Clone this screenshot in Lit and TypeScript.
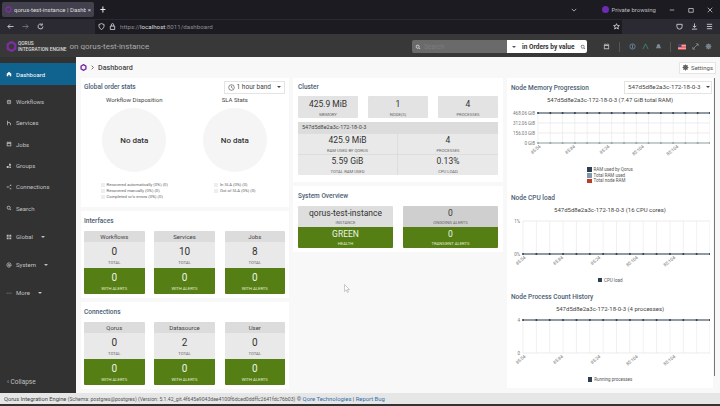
import { css, html, svg, LitElement } from "lit";
import { customElement, property } from "lit/decorators.js";

const ICONS: Record<string, string> = {
  home: "M8 2 2 7v7h4v-4h4v4h4V7z",
  workflows: "M8 2a6 6 0 1 0 0 12A6 6 0 0 0 8 2zm0 2a4 4 0 1 1 0 8 4 4 0 0 1 0-8zm0 2a2 2 0 1 0 0 4 2 2 0 0 0 0-4z",
  services: "M3 2h2v12H3zM5 6h5l3 3v5h-2v-4L9 8H5z",
  jobs: "M2 3h12v11H2zm2 4v5h8V7zM4 1h2v3H4zm6 0h2v3h-2z",
  groups: "M8 2h5v5H8zM2 8h5v5H2zM9 9h4v4H9z",
  connections: "M11 2h3v3h-3zM11 11h3v3h-3zM2 6.5h3v3H2zM5 7.3l6-3.5.6 1L5.6 8.2zM5.6 7.8l6 3.4-.6 1-6-3.4z",
  search: "M7 2a5 5 0 1 0 3 9l3 3 1.2-1.2-3-3A5 5 0 0 0 7 2zm0 1.8a3.2 3.2 0 1 1 0 6.4 3.2 3.2 0 0 1 0-6.400z",
  global: "M2 2h5v5H2zM9 2h5v5H9zM2 9h5v5H2zM9 9h5v5H9z",
  system: "M8 1.5a6.5 6.5 0 1 0 3.5 12l-.8-1.3A5 5 0 1 1 13 8v1h-1.5V8A3.5 3.5 0 1 0 10.5 10.5 2.2 2.2 0 0 0 14.5 9V8A6.5 6.5 0 0 0 8 1.5zm0 4.5a2 2 0 1 1 0 4 2 2 0 0 1 0-4z",
  more: "M2 7h2v2H2zM7 7h2v2H7zM12 7h2v2h-2z",
};

const NAV = [
  { label: "Workflows", icon: "workflows" },
  { label: "Services", icon: "services" },
  { label: "Jobs", icon: "jobs" },
  { label: "Groups", icon: "groups" },
  { label: "Connections", icon: "connections" },
  { label: "Search", icon: "search" },
];
const NAV_GROUPS = [
  { label: "Global", icon: "global" },
  { label: "System", icon: "system" },
  { label: "More", icon: "more" },
];

const INTERFACES = [
  { name: "Workflows", total: 0 },
  { name: "Services", total: 10 },
  { name: "Jobs", total: 8 },
];
const CONNECTIONS = [
  { name: "Qorus", total: 0 },
  { name: "Datasource", total: 2 },
  { name: "User", total: 0 },
];

const logo = (size: number) => html`<svg width=${size} height=${size} viewBox="0 0 16 16">
  <path d="M8 1.5 13.5 4.7v6.6L8 14.5 2.5 11.3V4.700z" fill="none" stroke="#7b2fa0" stroke-width="3.2" />
</svg>`;

const caret = html`<span class="caret"></span>`;

@customElement("line-chart")
export class LineChart extends LitElement {
  @property() heading = "";
  @property() subtitle = "";
  @property({ type: Array }) yLabels: string[] = [];
  @property({ type: Array }) lines: { y: number; color: string }[] = [];
  @property({ type: Array }) legend: { label: string; color: string }[] = [];
  @property({ type: Number }) left = 13;
  @property({ type: Number }) plotHeight = 33;
  @property({ type: Number }) plotTop = 5;
  @property({ type: Number }) legendGap = 24;

  static styles = css`
    :host {
      display: block;
    }
    h3 {
      margin: 0;
      padding-left: 1px;
      font: 500 6.5px/12px Roboto, sans-serif;
      color: #4a5d73;
    }
    .sub {
      text-align: center;
      font: 6px/12px Roboto, sans-serif;
      color: #444;
    }
    svg {
      display: block;
    }
    text {
      font: 4.5px Roboto, sans-serif;
      fill: #777;
    }
    .legend {
      display: flex;
      flex-direction: column;
      align-items: center;
      gap: 0.5px;
      font: 4.5px/5.2px Roboto, sans-serif;
      color: #555;
    }
    .legend div {
      width: 46px;
      display: flex;
      align-items: center;
      gap: 2px;
    }
    .legend.single div {
      width: auto;
    }
    .legend i {
      width: 4.5px;
      height: 4.5px;
      flex: none;
    }
  `;

  render() {
    const width = 200;
    const right = 200;
    const h = this.plotHeight;
    const top = this.plotTop;
    const steps = 14;
    const plot = right - this.left;
    const xs = Array.from({ length: steps + 1 }, (_, i) => this.left + (plot * i) / steps);
    const ticks = ["85:54", "85:84", "85:24", "85:104", "85:104"];
    return html`
      <h3>${this.heading}</h3>
      <div class="sub">${this.subtitle}</div>
      <svg width=${width} height=${top + h + this.legendGap} viewBox="0 0 ${width} ${top + h + this.legendGap}">
        ${xs.map((x) => svg`<line x1=${x} x2=${x} y1=${top} y2=${top + h} stroke="#e9e9e9" stroke-width="0.7" />`)}
        ${this.yLabels.map((label, i) => {
          const y = top + (h * i) / (this.yLabels.length - 1);
          return svg`
            <line x1=${this.left} x2=${right} y1=${y} y2=${y} stroke="#e4e4e4" stroke-width="0.7" />
            <text x=${this.left - 3} y=${y + 1.5} text-anchor="end">${label}</text>`;
        })}
        ${this.lines.map(
          (l) => svg`
            <line x1=${this.left} x2=${right} y1=${top + h * l.y} y2=${top + h * l.y} stroke=${l.color} stroke-width="1" />
            ${xs.map((x) => svg`<circle cx=${x} cy=${top + h * l.y} r="1" fill=${l.color} />`)}`
        )}
        ${ticks.map((t, i) => {
          const x = this.left + 3 + (i * plot) / 5;
          return svg`<text transform="translate(${x} ${top + h + 4}) rotate(-40)" text-anchor="end">${t}</text>`;
        })}
      </svg>
      <div class="legend ${this.legend.length === 1 ? "single" : ""}">
        ${this.legend.map((l) => html`<div><i style="background:${l.color}"></i>${l.label}</div>`)}
      </div>
    `;
  }
}

@customElement("app-root")
export class AppRoot extends LitElement {
  static styles = css`
    :host {
      display: flex;
      flex-direction: column;
      position: relative;
      width: 720px;
      height: 406px;
      overflow: hidden;
      font-family: Roboto, sans-serif;
      background: #f8f8f8;
      color: #333;
    }
    svg {
      display: block;
      flex: none;
    }

    /* browser chrome */
    .tabs {
      height: 19px;
      flex: none;
      background: #1c1b22;
      display: flex;
      align-items: center;
      padding-left: 2px;
      color: #ddd;
      font-size: 6px;
    }
    .tab {
      width: 92px;
      height: 15px;
      background: #42414d;
      border-radius: 2px;
      display: flex;
      align-items: center;
      gap: 2px;
      padding: 0 3px;
      box-sizing: border-box;
      white-space: nowrap;
      overflow: hidden;
    }
    .tab span {
      flex: 1;
      min-width: 0;
      overflow: hidden;
    }
    .new-tab {
      margin-left: 6px;
      font-size: 10px;
      color: #eee;
    }
    .spacer {
      flex: 1;
    }
    .private {
      display: flex;
      align-items: center;
      gap: 2px;
      margin-right: 13px;
      color: #bbb;
    }
    .private b {
      width: 7px;
      height: 7px;
      border-radius: 50%;
      background: #6e2ab0;
    }
    .win {
      display: flex;
      gap: 13px;
      margin-right: 7px;
      align-items: center;
    }
    .urlbar {
      height: 15px;
      flex: none;
      background: #2b2a33;
      display: flex;
      align-items: center;
      gap: 8px;
      padding-left: 7px;
    }
    .address {
      display: flex;
      align-items: center;
      gap: 4px;
      flex: 1;
      margin-left: 43px;
      padding-left: 3px;
      height: 14px;
      background: #1c1b22;
      color: #8c8c92;
      font-size: 6.2px;
    }
    .address b {
      color: #ddd;
      font-weight: 400;
    }
    .urlbar .tools {
      display: flex;
      gap: 8px;
      margin-right: 7px;
      margin-left: 46px;
    }

    /* app header */
    .appbar {
      height: 23px;
      flex: none;
      box-sizing: border-box;
      padding: 2px 0 0 6px;
      background: #383838;
      display: flex;
      align-items: center;
      color: #ccc;
    }
    .brand {
      margin-left: 1px;
      font-size: 4.8px;
      line-height: 5.5px;
      font-weight: 500;
      color: #ddd;
    }
    .on {
      margin-left: 3px;
      font-size: 8px;
      color: #aaa;
    }
    .search {
      display: flex;
      width: 175px;
      height: 13px;
      border-radius: 2px;
      overflow: hidden;
      font-size: 6.5px;
    }
    .search .in {
      width: 92px;
      background: #6a6a6a;
      display: flex;
      align-items: center;
      padding-left: 3px;
      gap: 3px;
      color: #7c7c7c;
    }
    .search .scope {
      flex: 1;
      background: #fff;
      color: #333;
      font-weight: 700;
      display: flex;
      align-items: center;
      gap: 6px;
      padding-left: 1px;
    }
    .search .scope .caret {
      color: #555;
    }
    .search .scope span:nth-child(2) {
      white-space: nowrap;
    }
    .app-icons {
      display: flex;
      align-items: center;
      margin: 0 8px 0 16px;
      gap: 6px;
    }
    .app-icons i {
      width: 1px;
      height: 10px;
      margin: 0 3px;
      background: #555;
    }
    .app-icons i.second {
      margin: 0 1px 0 2px;
    }

    /* body */
    .body {
      flex: 1;
      min-height: 0;
      display: flex;
    }
    .side {
      width: 76px;
      flex: none;
      background: #323232;
      color: #c0c0c0;
      font-size: 6px;
      display: flex;
      flex-direction: column;
      padding-top: 6px;
      box-sizing: border-box;
    }
    .item {
      height: 21.3px;
      flex: none;
      display: flex;
      align-items: center;
      gap: 4px;
      padding-left: 6px;
    }
    .item.active {
      height: 22px;
      margin-bottom: 6px;
      background: #10628f;
      color: #fff;
    }
    .item.group {
      height: 28px;
    }
    .nav-groups {
      margin-top: 4px;
    }
    .caret {
      width: 0;
      height: 0;
      border: 2px solid transparent;
      border-top: 2.5px solid currentColor;
      border-bottom: 0;
      margin-left: 4px;
    }
    .collapse {
      margin-top: auto;
      height: 23px;
      display: flex;
      align-items: center;
      padding-left: 7px;
      font-size: 6.5px;
    }

    .main {
      flex: 1;
      min-width: 0;
      display: flex;
      flex-direction: column;
      padding: 0 4px 5px 5px;
      position: relative;
    }
    .crumbs {
      height: 21px;
      flex: none;
      margin-left: -1px;
      display: flex;
      align-items: center;
      gap: 3px;
      font-size: 7.2px;
      font-weight: 500;
      color: #444;
    }
    .settings {
      display: flex;
      align-items: center;
      gap: 2px;
      height: 10px;
      padding: 0 2px;
      border: 1px solid #e5e5e5;
      background: #fff;
      font-size: 6px;
      font-weight: 400;
      color: #555;
    }
    .grid {
      flex: 1;
      min-height: 0;
      display: grid;
      grid-template-columns: 208px 210px 206px;
      column-gap: 4px;
      align-items: start;
    }
    .col {
      display: flex;
      flex-direction: column;
      gap: 4px;
    }
    .card {
      background: #fff;
      box-sizing: border-box;
    }
    .col-left .card {
      padding: 0 4px 4px 3px;
    }
    .col-mid .card {
      padding: 0 5px 4px 5px;
    }
    .col-mid .card.cluster {
      padding-bottom: 7px;
    }
    .card-head {
      height: 20px;
      display: flex;
      align-items: center;
      justify-content: space-between;
      font-size: 6.5px;
      font-weight: 500;
      color: #4a5d73;
    }
    .card-head.tight {
      height: 18px;
    }
    .picker {
      display: flex;
      align-items: center;
      gap: 2px;
      height: 13px;
      padding: 0 3px;
      border: 1px solid #e4e4e4;
      font-size: 6.5px;
      font-weight: 400;
      color: #444;
      box-sizing: border-box;
      white-space: nowrap;
    }
    .pies {
      display: flex;
      height: 107px;
    }
    .pie {
      flex: 1;
      display: flex;
      flex-direction: column;
      align-items: center;
      font-size: 6px;
      color: #444;
    }
    .disc {
      width: 64px;
      height: 64px;
      margin-top: 5px;
      border-radius: 50%;
      background: #f5f5f5;
      display: flex;
      align-items: center;
      justify-content: center;
      font-size: 8px;
      font-weight: 500;
      color: #333;
    }
    .pie-legend {
      margin-top: 10px;
      font-size: 4.2px;
      line-height: 6px;
      color: #666;
    }
    .pie-legend div {
      display: flex;
      align-items: center;
      gap: 2px;
    }
    .pie-legend i {
      width: 4px;
      height: 4px;
      background: #eee;
    }
    .tiles {
      display: grid;
      grid-template-columns: repeat(3, 60.5px);
      justify-content: space-between;
    }
    .tile {
      border-radius: 1px;
      overflow: hidden;
      text-align: center;
    }
    .tile-name {
      height: 11px;
      background: #dcdcdc;
      font-size: 6px;
      line-height: 11px;
      color: #444;
    }
    .tile-stat {
      height: 26px;
      background: #e9e9e9;
      display: flex;
      flex-direction: column;
      align-items: center;
      justify-content: center;
      color: #333;
    }
    .tile-stat.green {
      background: #557f14;
      color: #eef3e5;
    }
    .num {
      font-size: 10px;
      line-height: 15px;
    }
    .cap {
      font-size: 4.2px;
      line-height: 7px;
      color: #666;
      white-space: nowrap;
    }
    .green .cap {
      color: #e4ecd6;
    }
    .cluster-top {
      display: grid;
      grid-template-columns: repeat(3, 60px);
      justify-content: space-between;
      margin-bottom: 4px;
    }
    .plain {
      height: 22px;
      background: #e3e3e3;
      border-radius: 1px;
      text-align: center;
      padding-top: 2px;
      box-sizing: border-box;
    }
    .plain .num,
    .cell .num {
      font-size: 8.5px;
      line-height: 13px;
      color: #333;
    }
    .node {
      background: #e9e9e9;
      border-radius: 1px;
    }
    .node-name {
      height: 11px;
      padding-left: 4px;
      background: #dcdcdc;
      font-size: 5.5px;
      line-height: 11px;
      color: #444;
    }
    .node-cells {
      display: grid;
      grid-template-columns: 1fr 1fr;
    }
    .cell {
      height: 21px;
      text-align: center;
      border-top: 0.5px solid #ddd;
      box-sizing: border-box;
    }
    .cell:nth-child(odd) {
      border-right: 0.5px solid #ddd;
    }
    .overview {
      display: grid;
      grid-template-columns: 95px 95px;
      justify-content: space-between;
      text-align: center;
    }
    .overview .tile-stat {
      height: 21px;
      background: #dedede;
    }
    .overview .tile-stat.alt {
      background: #cfcfcf;
    }
    .overview .tile-stat.green {
      background: #557f14;
    }
    .overview .num {
      font-size: 8.5px;
      line-height: 13px;
    }
    .overview .cap {
      line-height: 6px;
    }
    .charts {
      height: 310px;
      padding: 0 3px;
      overflow: hidden;
    }
    .chart-head {
      height: 18px;
      margin: 0 -2px -14px 0;
    }
    .chart-head .picker {
      font-size: 6.2px;
      width: 88px;
      justify-content: space-between;
    }
    .chart-gap {
      margin-top: 8px;
    }
    .scroll {
      position: absolute;
      left: 638px;
      top: 21px;
      width: 1px;
      height: 298px;
      background: #777;
    }
    .cursor {
      position: absolute;
      left: 268px;
      top: 227px;
    }
    .status {
      height: 13px;
      flex: none;
      background: #e6e6e6;
      border-bottom: 2px solid #333;
      box-sizing: border-box;
      padding-left: 4px;
      font-size: 5.7px;
      line-height: 12px;
      color: #444;
      white-space: nowrap;
      overflow: hidden;
    }
    .status a {
      color: #2f6fa8;
      font-size: 5.9px;
    }
    .status small {
      font-size: 5.1px;
      color: #555;
    }
  `;

  private icon(name: string, color = "currentColor", size = 6) {
    return html`<svg width=${size} height=${size} viewBox="0 0 16 16"><path d=${ICONS[name]} fill=${color} fill-rule="evenodd" /></svg>`;
  }

  private tile(t: { name: string; total: number }) {
    return html`<div class="tile">
      <div class="tile-name">${t.name}</div>
      <div class="tile-stat"><div class="num">${t.total}</div><div class="cap">TOTAL</div></div>
      <div class="tile-stat green"><div class="num">0</div><div class="cap">WITH ALERTS</div></div>
    </div>`;
  }

  private pie(title: string, legend: string[]) {
    return html`<div class="pie">
      ${title}
      <div class="disc">No data</div>
      <div class="pie-legend">${legend.map((l) => html`<div><i></i>${l}</div>`)}</div>
    </div>`;
  }

  private chrome() {
    const stroke = "#d0d0d4";
    return html`
      <div class="tabs">
        <div class="tab">${logo(7)}<span>qorus-test-instance | Dashboard</span>×</div>
        <div class="new-tab">+</div>
        <div class="spacer"></div>
        <svg width="6" height="6" viewBox="0 0 8 8" style="margin-right:25px"><path d="M1 2.5 4 5.5 7 2.500" fill="none" stroke=${stroke} /></svg>
        <div class="private"><b></b>Private browsing</div>
        <div class="win">
          <svg width="6" height="6" viewBox="0 0 8 8"><path d="M1 4h6" stroke=${stroke} /></svg>
          <svg width="6" height="6" viewBox="0 0 8 8"><path d="M1 2h6v5H1z" fill="none" stroke=${stroke} /></svg>
          <svg width="6" height="6" viewBox="0 0 8 8"><path d="M1 1 7 7M7 1 1 7" stroke=${stroke} /></svg>
        </div>
      </div>
      <div class="urlbar">
        <svg width="7" height="7" viewBox="0 0 8 8"><path d="M7.5 4H1M3.5 1.5 1 4l2.500 2.500" fill="none" stroke=${stroke} /></svg>
        <svg width="7" height="7" viewBox="0 0 8 8"><path d="M.5 4H7M4.5 1.5 7 4 4.500 6.500" fill="none" stroke="#77767d" /></svg>
        <svg width="7" height="7" viewBox="0 0 8 8"><path d="M6.8 4A2.8 2.8 0 1 1 5.5 1.6M6 .5v2H4" fill="none" stroke=${stroke} /></svg>
        <div class="address">
          <svg width="7" height="7" viewBox="0 0 8 8"><path d="M4 .7 7 1.8C7 5 6 6.500 4 7.400 2 6.500 1 5 1 1.800z" fill="none" stroke=${stroke} /></svg>
          <svg width="7" height="7" viewBox="0 0 8 8"><path d="M1.5 3.5h5v4h-5zM2.7 3.5V2a1.3 1.3 0 0 1 2.6 0v1.500" fill="none" stroke=${stroke} /></svg>
          <span>https://<b>localhost</b>:8011/dashboard</span>
          <div class="spacer"></div>
          <svg width="7" height="7" viewBox="0 0 8 8" style="margin-right:2px"><path d="M4 .8 5 3h2.300L5.500 4.500l.6 2.400L4 5.600 1.900 6.900l.6-2.400L.7 3H3z" fill="none" stroke=${stroke} /></svg>
        </div>
        <div class="tools">
          <svg width="7" height="7" viewBox="0 0 8 8"><path d="M1 1.5h6V4a3 3 0 0 1-6 0z" fill="none" stroke=${stroke} /></svg>
          <svg width="7" height="7" viewBox="0 0 8 8"><path d="M4 .5V5M2 3.200 4 5.200 6 3.200M1 7h6" fill="none" stroke=${stroke} /></svg>
          <svg width="7" height="7" viewBox="0 0 8 8"><path d="M1 1.5h6M1 4h6M1 6.500h6" stroke=${stroke} /></svg>
        </div>
      </div>
    `;
  }

  private appbar() {
    const c = "#7d8a94";
    return html`<div class="appbar">
      ${logo(11)}
      <div class="brand">QORUS<br />INTEGRATION ENGINE</div>
      <div class="on">on qorus-test-instance</div>
      <div class="spacer"></div>
      <div class="search">
        <div class="in">${this.icon("search", "#ddd", 6)}Search</div>
        <div class="scope">${caret}<span>in Orders by value</span>${this.icon("search", "#666", 6)}</div>
      </div>
      <div class="app-icons">
        ${this.icon("jobs", "#b5b5b5", 7)}
        <i></i>
        <svg width="7" height="7" viewBox="0 0 8 8"><circle cx="4" cy="4" r="3" fill="none" stroke="#6d8aa5" /><path d="M4 2v4" stroke="#6d8aa5" /></svg>
        <svg width="7" height="7" viewBox="0 0 8 8"><path d="M1 7 4 1l3 6" fill="none" stroke="#3a8a7a" /></svg>
        <svg width="7" height="7" viewBox="0 0 8 8"><path d="M4 1C2.5 1 2 2.5 2 4L1 6h6L6 4c0-1.500-.5-3-2-3z" fill=${c} /></svg>
        <i class="second"></i>
        <svg width="8" height="6" viewBox="0 0 8 6"><rect width="8" height="6" fill="#c44" /><path d="M0 1.5h8M0 3h8M0 4.500h8" stroke="#eee" stroke-width=".6" /><rect width="3.5" height="3" fill="#447" /></svg>
        <svg width="7" height="7" viewBox="0 0 8 8"><path d="M1 7 7 1M4.5 1H7v2.500M1 4.500V7h2.500" fill="none" stroke=${c} /></svg>
        <svg width="7" height="7" viewBox="0 0 8 8"><circle cx="4" cy="4" r="2" fill="none" stroke=${c} stroke-width="1.5" /><path d="M4 .5v7M.5 4h7M1.5 1.5l5 5M6.5 1.5l-5 5" stroke=${c} stroke-width=".8" /></svg>
      </div>
    </div>`;
  }

  private sidebar() {
    return html`<nav class="side">
      <div class="item active">${this.icon("home")} Dashboard</div>
      ${NAV.map((n) => html`<div class="item">${this.icon(n.icon)}${n.label}</div>`)}
      <div class="nav-groups">
        ${NAV_GROUPS.map((n) => html`<div class="item group">${this.icon(n.icon)}${n.label}${caret}</div>`)}
      </div>
      <div class="collapse">‹ Collapse</div>
    </nav>`;
  }

  private col1() {
    return html`<div class="col col-left">
      <section class="card">
        <div class="card-head tight">
          Global order stats
          <div class="picker">
            <svg width="7" height="7" viewBox="0 0 8 8"><circle cx="4" cy="4" r="3.2" fill="none" stroke="#444" stroke-width=".7" /><path d="M4 2v2l1.500 1" fill="none" stroke="#444" stroke-width=".7" /></svg>
            1 hour band ${caret}
          </div>
        </div>
        <div class="pies">
          ${this.pie("Workflow Disposition", [
            "Recovered automatically (0%) (0)",
            "Recovered manually (0%) (0)",
            "Completed w/o errors (0%) (0)",
          ])}
          ${this.pie("SLA Stats", ["In SLA (0%) (0)", "Out of SLA (0%) (0)"])}
        </div>
      </section>
      <section class="card">
        <div class="card-head">Interfaces</div>
        <div class="tiles">${INTERFACES.map((t) => this.tile(t))}</div>
      </section>
      <section class="card">
        <div class="card-head">Connections</div>
        <div class="tiles">${CONNECTIONS.map((t) => this.tile(t))}</div>
      </section>
    </div>`;
  }

  private col2() {
    const top = [
      { v: "425.9 MiB", c: "MEMORY" },
      { v: "1", c: "NODE(S)" },
      { v: "4", c: "PROCESSES" },
    ];
    const cells = [
      { v: "425.9 MiB", c: "RAM USED BY QORUS" },
      { v: "4", c: "PROCESSES" },
      { v: "5.59 GiB", c: "TOTAL RAM USED" },
      { v: "0.13%", c: "CPU LOAD" },
    ];
    return html`<div class="col col-mid">
      <section class="card cluster">
        <div class="card-head tight">Cluster</div>
        <div class="cluster-top">
          ${top.map((t) => html`<div class="plain"><div class="num">${t.v}</div><div class="cap">${t.c}</div></div>`)}
        </div>
        <div class="node">
          <div class="node-name">547d5d8e2a3c-172-18-0-3</div>
          <div class="node-cells">
            ${cells.map((t) => html`<div class="cell"><div class="num">${t.v}</div><div class="cap">${t.c}</div></div>`)}
          </div>
        </div>
      </section>
      <section class="card">
        <div class="card-head">System Overview</div>
        <div class="overview">
          <div class="tile">
            <div class="tile-stat"><div class="num">qorus-test-instance</div><div class="cap">INSTANCE</div></div>
            <div class="tile-stat green"><div class="num">GREEN</div><div class="cap">HEALTH</div></div>
          </div>
          <div class="tile">
            <div class="tile-stat alt"><div class="num">0</div><div class="cap">ONGOING ALERTS</div></div>
            <div class="tile-stat green"><div class="num">0</div><div class="cap">TRANSIENT ALERTS</div></div>
          </div>
        </div>
      </section>
    </div>`;
  }

  private col3() {
    const navy = "#2c3e50";
    return html`<section class="card charts">
      <div class="card-head chart-head">
        <span></span>
        <div class="picker">547d5d8e2a3c-172-18-0-3 ${caret}</div>
      </div>
      <line-chart
        heading="Node Memory Progression"
        subtitle="547d5d8e2a3c-172-18-0-3 (7.47 GiB total RAM)"
        .yLabels=${["468.06 GiB", "312.06 GiB", "156.03 GiB", "0 GiB"]}
        .lines=${[
          { y: 0, color: navy },
          { y: 1, color: "#95a5a6" },
        ]}
        .legend=${[
          { label: "RAM used by Qorus", color: navy },
          { label: "Total RAM used", color: "#7f9aa8" },
          { label: "Total node RAM", color: "#c0392b" },
        ]}
        .left=${28}
        .plotTop=${7}
        .plotHeight=${30}
      ></line-chart>
      <line-chart
        class="chart-gap"
        heading="Node CPU load"
        subtitle="547d5d8e2a3c-172-18-0-3 (16 CPU cores)"
        .yLabels=${["1%", "0%"]}
        .lines=${[{ y: 1, color: navy }]}
        .legend=${[{ label: "CPU load", color: navy }]}
      ></line-chart>
      <line-chart
        class="chart-gap"
        heading="Node Process Count History"
        subtitle="547d5d8e2a3c-172-18-0-3 (4 processes)"
        .yLabels=${["4", "0"]}
        .lines=${[{ y: 0, color: navy }]}
        .legend=${[{ label: "Running processes", color: navy }]}
      ></line-chart>
    </section>`;
  }

  render() {
    return html`
      ${this.chrome()} ${this.appbar()}
      <div class="body">
        ${this.sidebar()}
        <main class="main">
          <div class="crumbs">
            ${logo(7)}
            <svg width="5" height="5" viewBox="0 0 8 8"><path d="M2.5 1 5.5 4 2.5 7" fill="none" stroke="#444" stroke-width="1.2" /></svg>
            Dashboard
            <div class="spacer"></div>
            <div class="settings">
              <svg width="7" height="7" viewBox="0 0 8 8"><circle cx="4" cy="4" r="2" fill="none" stroke="#555" stroke-width="1.5" /><path d="M4 .5v7M.5 4h7M1.5 1.5l5 5M6.5 1.5l-5 5" stroke="#555" stroke-width=".8" /></svg>
              Settings
            </div>
          </div>
          <div class="grid">${this.col1()} ${this.col2()} ${this.col3()}</div>
          <div class="scroll"></div>
          <svg class="cursor" width="6" height="9" viewBox="0 0 6 9"><path d="M.5.5v7l1.800-1.600 1.200 2.600 1-.5L3.300 5.500H5.500z" fill="#fff" stroke="#999" stroke-width=".5" /></svg>
        </main>
      </div>
      <footer class="status">
        Qorus Integration Engine <small>(Schema: postgres@postgres) (Version: 5.1.42_git.4f645e9043dee4100f6dced0ddffc2641fdc76b03)</small> © <a>Qore Technologies</a> | <a>Report Bug</a>
      </footer>
    `;
  }
}
